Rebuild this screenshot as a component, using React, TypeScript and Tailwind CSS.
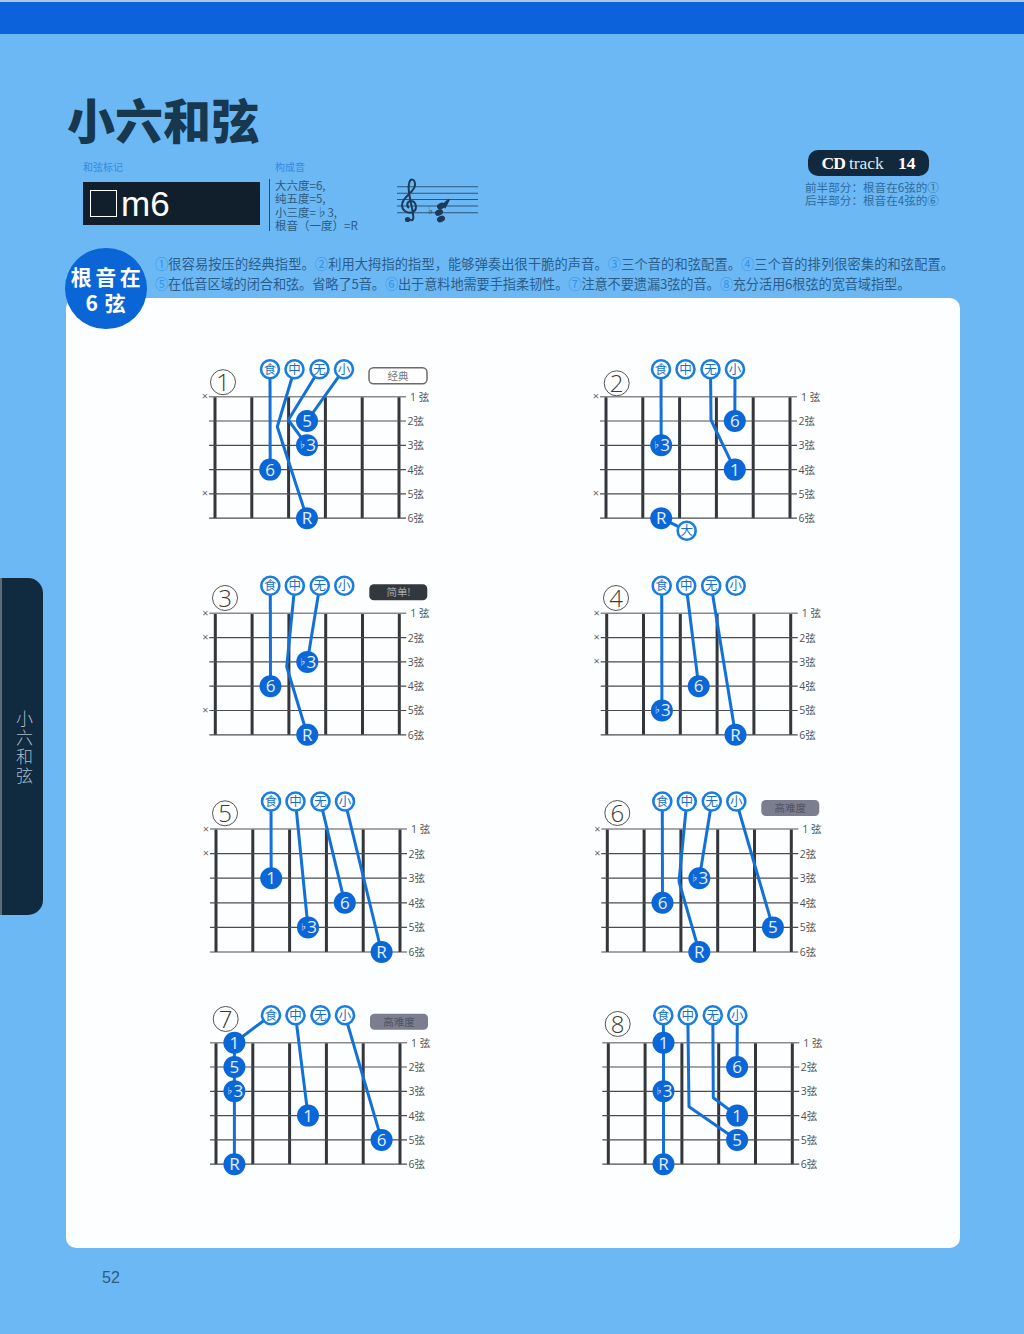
const FRET_X = 36.8
const FINGER_X = [55, 79.5, 104.5, 129]
const FINGER_NAMES = ["食", "中", "无", "小"]

type Dot = {
  fret: number
  str: number
  label: string
  finger?: number
  via?: [number, number][]
}

interface Chord {
  n: number
  x0: number
  y0: number
  gap?: number
  num: [number, number]
  mutes: number[]
  dots: Dot[]
  chain?: [number, number, number]
  thumb?: boolean
  badge?: { text: string; kind: "outline" | "dark" | "gray" }
}

const chords: Chord[] = [
  {
    n: 1, x0: 25, y0: 51.7, num: [8, -14.5], mutes: [1, 5],
    badge: { text: "经典", kind: "outline" },
    dots: [
      { fret: 2, str: 4, label: "6", finger: 0 },
      { fret: 3, str: 6, label: "R", finger: 1, via: [[62.3, 30]] },
      { fret: 3, str: 3, label: "♭3", finger: 2, via: [[73.3, 23.3]] },
      { fret: 3, str: 2, label: "5", finger: 3 },
    ],
  },
  {
    n: 2, x0: 26, y0: 51.7, num: [10.7, -13.4], mutes: [1, 5], thumb: true,
    dots: [
      { fret: 2, str: 3, label: "♭3", finger: 0 },
      { fret: 4, str: 4, label: "1", finger: 2, via: [[105, 23.3]] },
      { fret: 4, str: 2, label: "6", finger: 3 },
      { fret: 2, str: 6, label: "R" },
    ],
  },
  {
    n: 3, x0: 25.3, y0: 52.3, num: [9.7, -15.3], mutes: [1, 2, 5],
    badge: { text: "简单!", kind: "dark" },
    dots: [
      { fret: 2, str: 4, label: "6", finger: 0 },
      { fret: 3, str: 6, label: "R", finger: 1, via: [[71.4, 53.4]] },
      { fret: 3, str: 3, label: "♭3", finger: 2 },
    ],
  },
  {
    n: 4, x0: 26.7, y0: 52.3, num: [9.3, -15.3], mutes: [1, 2, 3],
    dots: [
      { fret: 2, str: 5, label: "♭3", finger: 0 },
      { fret: 3, str: 4, label: "6", finger: 1 },
      { fret: 4, str: 6, label: "R", finger: 2 },
    ],
  },
  {
    n: 5, x0: 26, y0: 52, gap: 24.6, num: [9, -15.7], mutes: [1, 2],
    dots: [
      { fret: 2, str: 3, label: "1", finger: 0 },
      { fret: 3, str: 5, label: "♭3", finger: 1 },
      { fret: 4, str: 4, label: "6", finger: 2 },
      { fret: 5, str: 6, label: "R", finger: 3 },
    ],
  },
  {
    n: 6, x0: 27.3, y0: 52, gap: 24.6, num: [10, -16], mutes: [1, 2],
    badge: { text: "高难度", kind: "gray" },
    dots: [
      { fret: 2, str: 4, label: "6", finger: 0 },
      { fret: 3, str: 6, label: "R", finger: 1, via: [[71.7, 52.7]] },
      { fret: 3, str: 3, label: "♭3", finger: 2 },
      { fret: 5, str: 5, label: "5", finger: 3 },
    ],
  },
  {
    n: 7, x0: 26, y0: 51.7, num: [9.7, -23.7], mutes: [],
    badge: { text: "高难度", kind: "gray" },
    chain: [1, 1, 6],
    dots: [
      { fret: 1, str: 1, label: "1", finger: 0 },
      { fret: 1, str: 2, label: "5" },
      { fret: 1, str: 3, label: "♭3" },
      { fret: 1, str: 6, label: "R" },
      { fret: 3, str: 4, label: "1", finger: 1 },
      { fret: 5, str: 5, label: "6", finger: 3 },
    ],
  },
  {
    n: 8, x0: 28.3, y0: 51.7, num: [9.4, -18.7], mutes: [],
    chain: [2, 1, 6],
    dots: [
      { fret: 2, str: 1, label: "1", finger: 0 },
      { fret: 2, str: 3, label: "♭3" },
      { fret: 2, str: 6, label: "R" },
      { fret: 4, str: 5, label: "5", finger: 1, via: [[80.7, 64]] },
      { fret: 4, str: 4, label: "1", finger: 2, via: [[105, 55]] },
      { fret: 4, str: 2, label: "6", finger: 3 },
    ],
  },
]

const fretX = (fret: number) => 18.4 + FRET_X * (fret - 1)

function ChordDiagram({ chord }: { chord: Chord }) {
  const gap = chord.gap ?? 24.3
  const strY = (s: number) => gap * (s - 1)
  const fingerY = -27.5

  return (
    <svg
      width="260"
      height="214"
      className="overflow-visible font-['Open_Sans','Noto_Sans_CJK_SC',sans-serif]"
    >
      <g transform={`translate(${chord.x0} ${chord.y0})`}>
        {/* frets and strings */}
        {[0, 1, 2, 3, 4, 5].map((i) => (
          <line
            key={i}
            x1={FRET_X * i}
            x2={FRET_X * i}
            y1={0}
            y2={gap * 5}
            stroke="#33363a"
            strokeWidth={3}
          />
        ))}
        {[1, 2, 3, 4, 5, 6].map((s) => (
          <g key={s}>
            <line
              x1={-6}
              x2={191}
              y1={strY(s)}
              y2={strY(s)}
              stroke={s === 1 ? "#8a8a8a" : "#4a4d50"}
              strokeWidth={s === 1 ? 1.4 : 1.2}
            />
            <text
              x={s === 1 ? 195 : 192.5}
              y={strY(s) + 4}
              fontSize="10.5"
              fill="#4e5358"
            >
              {s === 1 ? "1 弦" : `${s}弦`}
            </text>
          </g>
        ))}
        {chord.mutes.map((s) => (
          <text key={s} x={-10} y={strY(s) + 3.5} fontSize="11" textAnchor="middle" fill="#666">
            ×
          </text>
        ))}

        {/* circled number */}
        <circle cx={chord.num[0]} cy={chord.num[1]} r={12.5} fill="#fff" stroke="#555" strokeWidth={1} />
        <text
          x={chord.num[0]}
          y={chord.num[1] + 8.5}
          fontSize="24"
          fontWeight="300"
          textAnchor="middle"
          fill="#3a3a3a"
        >
          {chord.n}
        </text>

        {/* finger lines */}
        {chord.chain && (
          <line
            x1={fretX(chord.chain[0])}
            x2={fretX(chord.chain[0])}
            y1={strY(chord.chain[1])}
            y2={strY(chord.chain[2])}
            stroke="#1271d8"
            strokeWidth={3}
          />
        )}
        {chord.dots
          .filter((d) => d.finger !== undefined)
          .map((d, i) => {
            const start = `${FINGER_X[d.finger!]},${fingerY}`
            const via = (d.via ?? []).map((p) => p.join(",")).join(" ")
            const end = `${fretX(d.fret)},${strY(d.str)}`
            return (
              <polyline
                key={i}
                points={`${start} ${via} ${end}`}
                fill="none"
                stroke="#1271d8"
                strokeWidth={3}
                strokeLinejoin="round"
              />
            )
          })}
        {chord.thumb && (
          <line
            x1={fretX(2)}
            y1={strY(6)}
            x2={80.7}
            y2={134}
            stroke="#1271d8"
            strokeWidth={3}
          />
        )}

        {/* finger names */}
        {FINGER_NAMES.map((name, i) => (
          <g key={name}>
            <circle cx={FINGER_X[i]} cy={fingerY} r={9} fill="#fff" stroke="#1a7ee0" strokeWidth={2.6} />
            <text
              x={FINGER_X[i]}
              y={fingerY + 4.5}
              fontSize="12.5"
              textAnchor="middle"
              fill="#1b6fc4"
            >
              {name}
            </text>
          </g>
        ))}
        {chord.thumb && (
          <g>
            <circle cx={80.7} cy={134} r={9} fill="#fff" stroke="#1a7ee0" strokeWidth={2.6} />
            <text x={80.7} y={138.5} fontSize="12.5" textAnchor="middle" fill="#1b6fc4">
              大
            </text>
          </g>
        )}

        {/* note dots */}
        {chord.dots.map((d, i) => (
          <g key={i}>
            <circle cx={fretX(d.fret)} cy={strY(d.str)} r={11} fill="#0b66d8" />
            <text
              x={fretX(d.fret)}
              y={strY(d.str) + 6}
              fontSize="17"
              textAnchor="middle"
              fill="#e3effc"
            >
              {d.label.startsWith("♭") ? (
                <>
                  <tspan fontSize="8" dy="-3">♭</tspan>
                  <tspan dy="3">3</tspan>
                </>
              ) : (
                d.label
              )}
            </text>
          </g>
        ))}

        {/* difficulty badge */}
        {chord.badge && (
          <g>
            <rect
              x={154}
              y={-29}
              width={58}
              height={16}
              rx={4.5}
              fill={
                chord.badge.kind === "outline"
                  ? "#fff"
                  : chord.badge.kind === "dark"
                    ? "#33383e"
                    : "#7c7e90"
              }
              stroke={chord.badge.kind === "outline" ? "#6b6b6b" : "none"}
              strokeWidth={1.5}
            />
            <text
              x={183}
              y={-17}
              fontSize="10.5"
              textAnchor="middle"
              fill={
                chord.badge.kind === "outline"
                  ? "#777"
                  : chord.badge.kind === "dark"
                    ? "#a4a8ac"
                    : "#50525f"
              }
            >
              {chord.badge.text}
            </text>
          </g>
        )}
      </g>
    </svg>
  )
}

function Staff() {
  return (
    <svg width="84" height="48" viewBox="396 177 84 48" className="shrink-0">
      {[186.7, 193.3, 199.5, 206, 212.7].map((y) => (
        <line key={y} x1={397} x2={478} y1={y} y2={y} stroke="#28557c" strokeWidth={1.1} />
      ))}
      <path
        d="M409 219 C413 222 414 219 413 214 C412 205 407 190 409 184 C410 178 415 178 415 185 C415 192 402 197 402 205 C402 211 408 214 413 212 C418 209 416 201 411 201 C407 201 406 206 409 208"
        fill="none"
        stroke="#1d3a58"
        strokeWidth={2}
      />
      <circle cx={407.5} cy={219.5} r={2.6} fill="#1d3a58" />
      <text x={428} y={214} fontSize="10" fill="#1d3a58" fontFamily="DejaVu Sans">♭</text>
      <ellipse cx={441} cy={206} rx={4.2} ry={3} fill="#1d3a58" transform="rotate(-25 441 206)" />
      <ellipse cx={439} cy={212.5} rx={4.2} ry={3} fill="#1d3a58" transform="rotate(-25 439 212.5)" />
      <ellipse cx={441} cy={219} rx={4.2} ry={3} fill="#1d3a58" transform="rotate(-25 441 219)" />
      <path d="M443 205 L449 199.5 L445 207 Z" fill="#1d3a58" stroke="#1d3a58" strokeWidth={2} />
    </svg>
  )
}

const Num = ({ children }: { children: string }) => (
  <span className="text-[#2f93ea]">{children}</span>
)

export default function App() {
  return (
    <div className="relative h-[1334px] w-[1024px] overflow-hidden bg-[#6cb8f4] font-['Noto_Sans_CJK_SC',sans-serif]">
      <div className="h-[34px] border-t-2 border-[#a9c6e6] bg-[#0b62da]" />

      {/* title */}
      <h1 className="mt-[49px] ml-[67px] h-[77px] text-[48px] font-black leading-[70px] text-[#18384f]">
        小六和弦
      </h1>

      {/* chord info row */}
      <div className="flex h-[93px] pl-[83px]">
        <div className="w-[177px] shrink-0">
          <p className="h-[22px] text-[10px] leading-[14px] text-[#3589dc]">和弦标记</p>
          <div className="flex h-[43px] items-center bg-[#111f2d] pl-[7px]">
            <span className="h-[27px] w-[27px] shrink-0 border border-white" />
            <span className="ml-[4px] font-['Liberation_Sans',sans-serif] text-[35px] leading-none text-white">
              m6
            </span>
          </div>
        </div>
        <div className="ml-[9px] w-[127px] shrink-0">
          <p className="h-[19px] pl-[6px] text-[10px] leading-[14px] text-[#3589dc]">构成音</p>
          <div className="h-[52px] border-l border-[#24506f] pl-[5px] text-[11.5px] leading-[13.4px] text-[#2d5a80]">
            <p>大六度=6,</p>
            <p>纯五度=5,</p>
            <p>小三度=♭3,</p>
            <p className="whitespace-nowrap">根音（一度）=R</p>
          </div>
        </div>
        <div className="pt-[17px]">
          <Staff />
        </div>
        <div className="-mt-[10px] ml-[325px] w-[140px] shrink-0">
          <div className="ml-[3px] flex h-[26px] w-[121px] items-center justify-center rounded-[10px] bg-[#12283c] font-['Liberation_Serif',serif] text-[17.5px] text-white">
            <span className="font-bold tracking-[-1px]">CD</span>
            <span className="ml-[4px] font-normal text-[#dfe8ef]">track</span>
            <span className="ml-[14px] font-bold">14</span>
          </div>
          <p className="mt-[5px] whitespace-pre text-[11.6px] leading-[12.6px] text-[#2f6a9c]">
            {"前半部分：根音在6弦的①\n后半部分：根音在4弦的⑥"}
          </p>
        </div>
      </div>

      {/* description */}
      <div className="flex h-[45px] flex-col pt-[1px] pl-[155px] text-[13.2px] leading-[20px] whitespace-nowrap text-[#2a5d8c]">
        <p className="tracking-[0.13px]">
          <Num>①</Num>很容易按压的经典指型。<Num>②</Num>利用大拇指的指型，能够弹奏出很干脆的声音。<Num>③</Num>三个音的和弦配置。<Num>④</Num>三个音的排列很密集的和弦配置。
        </p>
        <p className="tracking-[-0.09px]">
          <Num>⑤</Num>在低音区域的闭合和弦。省略了5音。<Num>⑥</Num>出于意料地需要手指柔韧性。<Num>⑦</Num>注意不要遗漏3弦的音。<Num>⑧</Num>充分活用6根弦的宽音域指型。
        </p>
      </div>

      {/* white panel with the eight chords */}
      <section className="ml-[66px] h-[950px] w-[894px] rounded-[10px] bg-[#fdfeff] pt-[47px] pl-[124px]">
        <div className="grid grid-cols-[390px_390px] grid-rows-[216px_216px_214px_216px]">
          {chords.map((c) => (
            <ChordDiagram key={c.n} chord={c} />
          ))}
        </div>
      </section>

      <p className="mt-[18px] ml-[102px] font-['Liberation_Sans',sans-serif] text-[16px] text-[#2c5b84]">52</p>

      {/* root note badge */}
      <div className="absolute top-[248px] left-[65px] flex h-[81px] w-[82px] flex-col items-center justify-center rounded-full bg-[#0a66d6] text-white">
        <span className="pl-[3px] text-[21px] leading-[26px] font-bold tracking-[3.5px]">根音在</span>
        <span className="text-[21px] leading-[26px] font-bold tracking-[1px]">6 弦</span>
      </div>

      {/* side tab */}
      <div className="absolute top-[578px] left-0 flex h-[337px] w-[43px] items-center justify-center rounded-r-[15px] border-l-2 border-[#5d6b78] bg-[#102a3f]">
        <span className="mt-[2px] ml-[4px] text-[17px] leading-none font-light tracking-[2px] text-[#a9bccb] [writing-mode:vertical-rl]">
          小六和弦
        </span>
      </div>
    </div>
  )
}
